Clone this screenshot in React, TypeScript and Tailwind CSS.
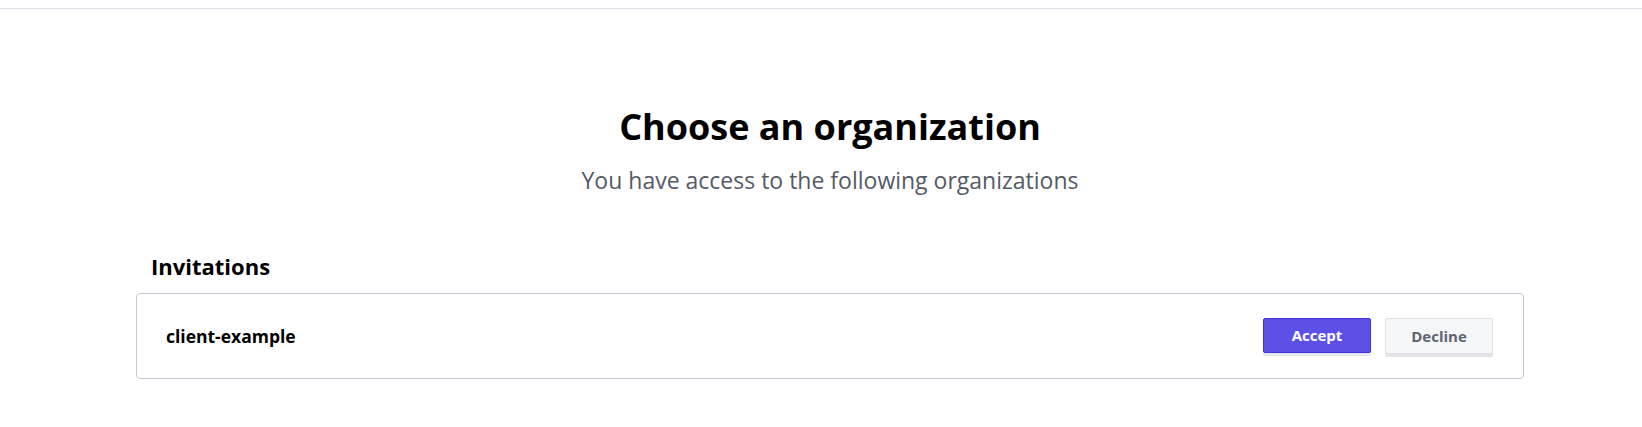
export default function App() {
  return (
    <div className="min-h-[427px] bg-white font-['Open_Sans',sans-serif] text-black">
      <div className="h-[9px] border-b border-[#e1e0ea]" />
      <div className="flex flex-col items-center pl-[18px]">
        <h1 className="mt-[96px] text-[36px] font-bold leading-[44px]">Choose an organization</h1>
        <p className="mt-[16px] text-[23px] leading-[30px] text-[#545a66]">You have access to the following organizations</p>
        <div className="mt-[56px] w-[1388px]">
          <h2 className="pl-[15px] text-[22px] font-bold leading-[30px]">Invitations</h2>
          <div className="mt-[12px] flex h-[86px] items-center justify-between rounded border border-[#c3c7d3] pl-[29px] pr-[30px]">
            <span className="text-[17.5px] font-bold">client-example</span>
            <div className="flex gap-[14px]">
              <button className="h-[35px] w-[108px] rounded-[2px] border border-[#3f32de] bg-[#5c50e6] text-[15px] font-bold text-white shadow-[0_3px_0_#e6e7ec]">
                Accept
              </button>
              <button className="h-[36px] w-[108px] rounded-[2px] border border-[#dfe1e7] bg-[#f5f6f8] text-[15px] font-bold text-[#5e6371] shadow-[0_3px_0_#e3e4e9]">
                Decline
              </button>
            </div>
          </div>
        </div>
      </div>
    </div>
  );
}
